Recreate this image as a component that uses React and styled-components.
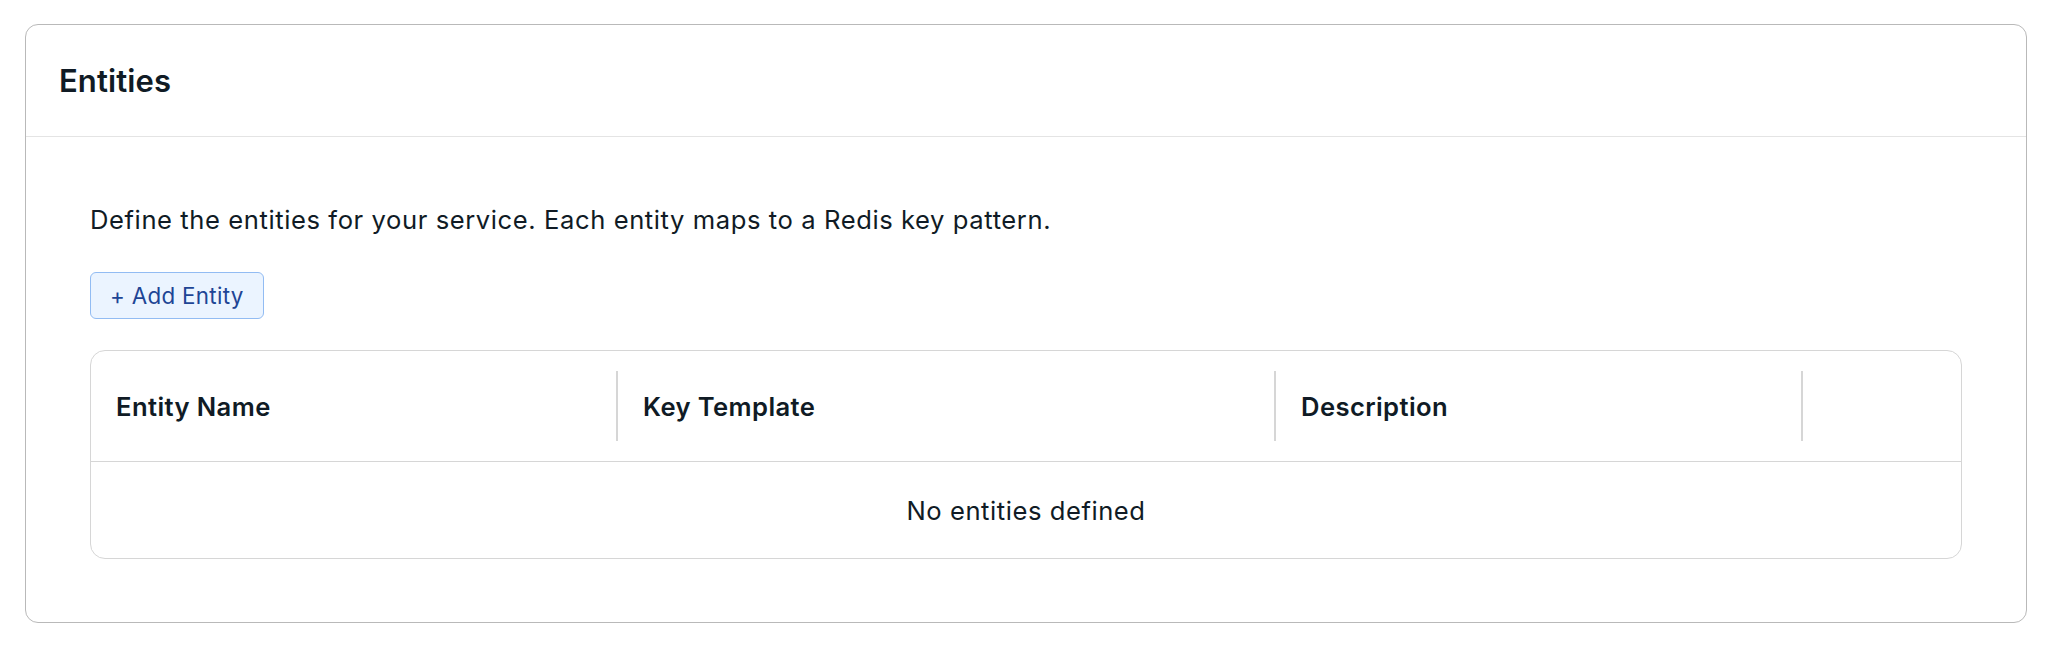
import React from "react";
import styled, { createGlobalStyle } from "styled-components";

const COLORS = {
  text: "#101b25",
  cardBorder: "#b9b9b9",
  divider: "#e4e4e4",
  tableBorder: "#d6d6d6",
  buttonBg: "#ebf4ff",
  buttonBorder: "#92bcf3",
  buttonText: "#1e4595",
};

const COLUMNS = [
  { label: "Entity Name", width: "527px" },
  { label: "Key Template", width: "658px" },
  { label: "Description", width: "527px" },
  { label: "", width: "1fr" },
];

const GlobalStyle = createGlobalStyle`
  * {
    box-sizing: border-box;
  }
  body {
    margin: 0;
    background: #ffffff;
    font-family: Inter, "Liberation Sans", sans-serif;
    color: ${COLORS.text};
  }
`;

const App = () => {
  return (
    <>
      <GlobalStyle />
      <Page>
        <Card>
          <CardHeader>
            <Title>Entities</Title>
          </CardHeader>
          <CardBody>
            <Description>
              Define the entities for your service. Each entity maps to a Redis
              key pattern.
            </Description>
            <AddButton type="button">+ Add Entity</AddButton>
            <Table>
              <HeadRow $columns={COLUMNS.map((c) => c.width).join(" ")}>
                {COLUMNS.map((col, i) => (
                  <HeadCell key={i} $divider={i < COLUMNS.length - 1}>
                    {col.label}
                  </HeadCell>
                ))}
              </HeadRow>
              <EmptyRow>No entities defined</EmptyRow>
            </Table>
          </CardBody>
        </Card>
      </Page>
    </>
  );
};

const Page = styled.div`
  padding: 24px 37px 33px 25px;
`;

const Card = styled.section`
  width: 2002px;
  border: 1px solid ${COLORS.cardBorder};
  border-radius: 13px;
  background: #ffffff;
`;

const CardHeader = styled.header`
  display: flex;
  align-items: center;
  height: 112px;
  padding: 0 33px;
  border-bottom: 1px solid ${COLORS.divider};
`;

const Title = styled.h2`
  margin: 0;
  font-size: 31px;
  font-weight: 600;
  letter-spacing: 0.1px;
`;

const CardBody = styled.div`
  display: flex;
  flex-direction: column;
  align-items: flex-start;
  padding: 64px 64px 63px;
`;

const Description = styled.p`
  margin: 0;
  font-size: 25.6px;
  line-height: 38px;
  letter-spacing: 0.58px;
`;

const AddButton = styled.button`
  margin-top: 33px;
  height: 47px;
  padding: 0 19px;
  border: 1.5px solid ${COLORS.buttonBorder};
  border-radius: 6px;
  background: ${COLORS.buttonBg};
  color: ${COLORS.buttonText};
  font-family: inherit;
  font-size: 22.4px;
  letter-spacing: 0.3px;
  cursor: pointer;
`;

const Table = styled.div`
  align-self: stretch;
  margin-top: 31px;
  border: 1px solid ${COLORS.tableBorder};
  border-radius: 15px;
  overflow: hidden;
`;

const HeadRow = styled.div`
  display: grid;
  grid-template-columns: ${(p) => p.$columns};
  align-items: center;
  height: 111px;
  border-bottom: 1px solid ${COLORS.tableBorder};
`;

const HeadCell = styled.div`
  display: flex;
  align-items: center;
  height: 70px;
  padding: 0 25px;
  font-size: 25.6px;
  font-weight: 600;
  letter-spacing: 0.4px;
  border-right: ${(p) => (p.$divider ? `2px solid ${COLORS.tableBorder}` : "none")};
`;

const EmptyRow = styled.div`
  display: flex;
  align-items: center;
  justify-content: center;
  height: 96px;
  font-size: 25.6px;
  letter-spacing: 0.55px;
`;

export default App;
